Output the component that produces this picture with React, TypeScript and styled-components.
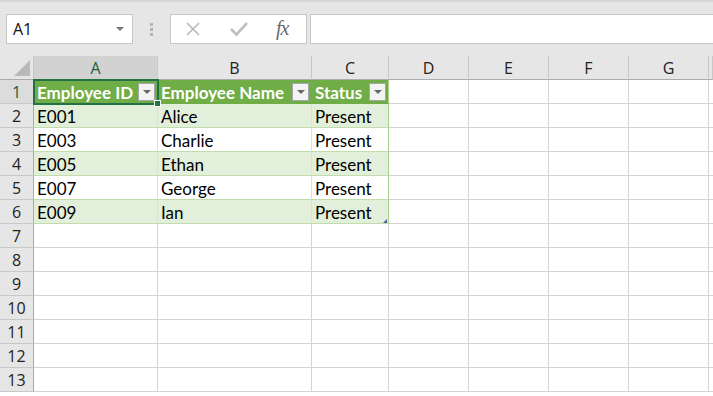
import React from "react";
import styled, { createGlobalStyle } from "styled-components";

const Global = createGlobalStyle`
  html, body { margin: 0; padding: 0; background: #ffffff; overflow: hidden; }
  body { font-family: "Lato", "Liberation Sans", sans-serif; }
`;

const Page = styled.div`
  width: 713px;
  height: 396px;
  display: flex;
  flex-direction: column;
  background: #e6e6e6;
  overflow: hidden;
`;

const Toolbar = styled.div`
  height: 55px;
  box-sizing: border-box;
  border-top: 2px solid #d6d6d6;
  padding: 12px 0 0 6px;
  display: flex;
  align-items: flex-start;
`;

const NameBox = styled.div`
  width: 127px;
  height: 30px;
  box-sizing: border-box;
  background: #fff;
  border: 1px solid #c6c6c6;
  display: flex;
  align-items: center;
  justify-content: space-between;
  padding: 0 8px 0 6px;
  font-size: 16px;
  color: #111;
  font-family: "Open Sans", "Liberation Sans", sans-serif;
`;

const Caret = styled.span`
  width: 0;
  height: 0;
  border-left: 4px solid transparent;
  border-right: 4px solid transparent;
  border-top: 4px solid #777;
`;

const Dots = styled.div`
  width: 37px;
  height: 30px;
  display: flex;
  flex-direction: column;
  align-items: center;
  justify-content: center;
  gap: 2px;
  span {
    width: 3px;
    height: 3px;
    background: #b4b4b4;
  }
`;

const FxBox = styled.div`
  width: 137px;
  height: 30px;
  box-sizing: border-box;
  background: #fff;
  border: 1px solid #c6c6c6;
  display: flex;
  align-items: center;
  padding: 0 0 0 13px;
  gap: 27px;
`;

const FxText = styled.span`
  font-family: "Liberation Serif", serif;
  font-style: italic;
  font-size: 20px;
  color: #6a6a6a;
  letter-spacing: -1px;
  margin-top: -2px;
`;

const FormulaInput = styled.div`
  flex: 1;
  height: 30px;
  margin-left: 3px;
  box-sizing: border-box;
  background: #fff;
  border-top: 1px solid #c6c6c6;
  border-bottom: 1px solid #c6c6c6;
  border-left: 1px solid #c6c6c6;
`;

const COLS = [34, 124, 154, 77, 80, 80, 80, 80, 4];

const Sheet = styled.div`
  position: relative;
  display: grid;
  grid-template-columns: ${COLS.map((c) => c + "px").join(" ")};
  grid-auto-rows: 24px;
  background: #fff;
  flex: 1;
  align-content: start;
  margin-top: 1px;
`;

const Corner = styled.div`
  background: #e6e6e6;
  box-sizing: border-box;
  border-right: 1px solid #c8c8c8;
  border-bottom: 1px solid #ababab;
  position: relative;
  &::after {
    content: "";
    position: absolute;
    right: 3px;
    bottom: 3px;
    width: 0;
    height: 0;
    border-left: 16px solid transparent;
    border-bottom: 16px solid #b9b9b9;
  }
`;

const ColHead = styled.div<{ $sel?: boolean }>`
  background: ${(p) => (p.$sel ? "#d2d2d2" : "#e6e6e6")};
  box-sizing: border-box;
  border-right: 1px solid #c8c8c8;
  border-bottom: 1px solid ${(p) => (p.$sel ? "#217346" : "#ababab")};
  display: flex;
  align-items: center;
  justify-content: center;
  font-family: "Open Sans", "Liberation Sans", sans-serif;
  font-size: 16px;
  color: ${(p) => (p.$sel ? "#1e5e3a" : "#222")};
  padding-top: 1px;
`;

const RowHead = styled.div<{ $sel?: boolean }>`
  background: ${(p) => (p.$sel ? "#dcdcdc" : "#e6e6e6")};
  box-sizing: border-box;
  border-right: 1px solid #ababab;
  border-bottom: 1px solid #c8c8c8;
  display: flex;
  align-items: center;
  justify-content: center;
  font-family: "Open Sans", "Liberation Sans", sans-serif;
  font-size: 16px;
  color: ${(p) => (p.$sel ? "#1e5e3a" : "#222")};
  padding-top: 1px;
`;

const Cell = styled.div<{ $kind: "head" | "band" | "plain" | "empty"; $last?: boolean }>`
  box-sizing: border-box;
  border-right: 1px solid
    ${(p) => (p.$kind === "empty" ? "#d4d4d4" : p.$last ? "#a9d08e" : p.$kind === "head" ? "#70ad47" : "#d5e6ca")};
  border-bottom: 1px solid
    ${(p) => (p.$kind === "empty" ? "#d4d4d4" : p.$kind === "head" ? "#70ad47" : "#c2dcae")};
  background: ${(p) =>
    p.$kind === "head" ? "#70ad47" : p.$kind === "band" ? "#e2efda" : "#ffffff"};
  color: ${(p) => (p.$kind === "head" ? "#ffffff" : "#000")};
  font-weight: ${(p) => (p.$kind === "head" ? 700 : 400)};
  font-family: "Lato", "Liberation Sans", sans-serif;
  font-size: 17px;
  display: flex;
  align-items: center;
  justify-content: space-between;
  padding: 1px 2px 0 3px;
  white-space: nowrap;
  overflow: hidden;
`;

const FilterBtn = styled.span`
  width: 17px;
  height: 18px;
  flex: none;
  box-sizing: border-box;
  background: #f3f3f3;
  border: 1px solid #a6a6a6;
  display: flex;
  align-items: center;
  justify-content: center;
  margin-top: -1px;
  &::after {
    content: "";
    width: 0;
    height: 0;
    border-left: 4px solid transparent;
    border-right: 4px solid transparent;
    border-top: 4px solid #666;
  }
`;

const Selection = styled.div`
  position: absolute;
  left: 33px;
  top: 23px;
  width: 126px;
  height: 26px;
  box-sizing: border-box;
  border: 2px solid #217346;
  pointer-events: none;
  &::after {
    content: "";
    position: absolute;
    right: -4px;
    bottom: -4px;
    width: 5px;
    height: 5px;
    background: #217346;
    border: 1px solid #fff;
  }
`;

const ResizeHandle = styled.div`
  position: absolute;
  left: 383px;
  top: 163px;
  width: 0;
  height: 0;
  border-left: 4px solid transparent;
  border-bottom: 4px solid #4a62a8;
`;

const letters = ["A", "B", "C", "D", "E", "F", "G", ""];
const data = [
  ["E001", "Alice", "Present"],
  ["E003", "Charlie", "Present"],
  ["E005", "Ethan", "Present"],
  ["E007", "George", "Present"],
  ["E009", "Ian", "Present"],
];
const headers = ["Employee ID", "Employee Name", "Status"];

export default function App() {
  const rows: React.ReactNode[] = [];
  for (let r = 1; r <= 13; r++) {
    rows.push(
      <RowHead key={"rh" + r} $sel={r === 1}>
        {r}
      </RowHead>
    );
    for (let c = 0; c < 8; c++) {
      const key = `c${r}-${c}`;
      if (c < 3 && r === 1) {
        rows.push(
          <Cell key={key} $kind="head" $last={c === 2}>
            <span>{headers[c]}</span>
            <FilterBtn />
          </Cell>
        );
      } else if (c < 3 && r <= 6) {
        rows.push(
          <Cell key={key} $kind={r % 2 === 0 ? "band" : "plain"} $last={c === 2}>
            <span>{data[r - 2][c]}</span>
          </Cell>
        );
      } else {
        rows.push(<Cell key={key} $kind="empty" />);
      }
    }
  }
  return (
    <Page>
      <Global />
      <Toolbar>
        <NameBox>
          <span>A1</span>
          <Caret />
        </NameBox>
        <Dots>
          <span />
          <span />
          <span />
        </Dots>
        <FxBox>
          <svg width="18" height="18" viewBox="0 0 18 18">
            <path d="M3 3 L15 15 M15 3 L3 15" stroke="#b8b8b8" strokeWidth="1.6" fill="none" />
          </svg>
          <svg width="20" height="18" viewBox="0 0 20 18">
            <path d="M2 9 L7.5 14.5 L18 3" stroke="#c0c0c0" strokeWidth="2.6" fill="none" />
          </svg>
          <FxText>fx</FxText>
        </FxBox>
        <FormulaInput />
      </Toolbar>
      <Sheet>
        <Corner />
        {letters.map((l, i) => (
          <ColHead key={"ch" + i} $sel={i === 0}>
            {l}
          </ColHead>
        ))}
        {rows}
        <Selection />
        <ResizeHandle />
      </Sheet>
    </Page>
  );
}
